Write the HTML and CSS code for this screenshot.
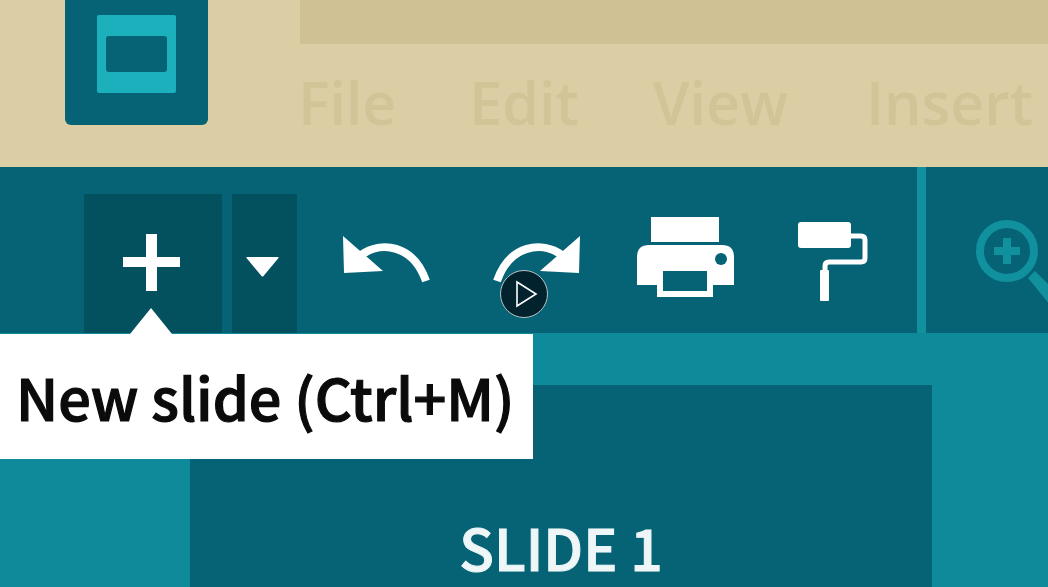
FILE: index.html
```html
<!DOCTYPE html>
<html lang="en">
<head>
    <meta charset="UTF-8">
    <meta name="viewport" content="width=device-width, initial-scale=1.0">
    <title>Slides toolbar</title>
    <link rel="stylesheet" href="styles.css">
</head>
<body>
    <div class="app">
        <header class="top">
            <div class="logo"><div class="logo-page"><div class="logo-slide"></div></div></div>
            <div class="top-right">
                <div class="title-bar"></div>
                <nav class="menu">
                    <span class="menu-file">File</span>
                    <span class="menu-edit">Edit</span>
                    <span class="menu-view">View</span>
                    <span class="menu-insert">Insert</span>
                </nav>
            </div>
        </header>

        <div class="toolbar">
            <div class="btn btn-new">
                <svg class="icon-plus" width="57" height="57" viewBox="0 0 57 57"><path d="M23 0h11v23h23v10H34v24H23V33H0V23h23z" fill="#fff"/></svg>
            </div>
            <div class="btn btn-drop">
                <svg class="icon-caret" width="33" height="20" viewBox="0 0 33 20"><path d="M1 0h31q1 0 .5 1L17.5 19q-1 1-2 0L.5 1Q0 0 1 0z" fill="#fff"/></svg>
            </div>
            <svg class="icon-undo" width="87" height="47" viewBox="0 0 87 47">
                <path d="M0 0l1 37 39-2z" fill="#fff"/>
                <path d="M18 19C38 5 70 8 83 45" fill="none" stroke="#fff" stroke-width="8"/>
            </svg>
            <svg class="icon-redo" width="87" height="47" viewBox="0 0 87 47">
                <path d="M87 0l-1 37-39-2z" fill="#fff"/>
                <path d="M69 19C49 5 17 8 4 45" fill="none" stroke="#fff" stroke-width="8"/>
            </svg>
            <svg class="icon-print" width="97" height="80" viewBox="0 0 97 80">
                <rect x="14" width="68" height="25" fill="#fff"/>
                <path d="M12 28h73q12 0 12 12v28H76v12H20V68H0V40q0-12 12-12z" fill="#fff"/>
                <rect x="26" y="54" width="44" height="20" fill="#056375"/>
                <circle cx="84" cy="42" r="6" fill="#056375"/>
            </svg>
            <svg class="icon-roller" width="70" height="79" viewBox="0 0 70 79">
                <rect width="53" height="26" rx="3" fill="#fff"/>
                <path d="M52 14h11q4 0 4 4v18q0 4-4 4H31q-4 0-4 4v6" fill="none" stroke="#fff" stroke-width="5"/>
                <rect x="22" y="48" width="9" height="31" rx="1" fill="#fff"/>
            </svg>
            <div class="divider"></div>
            <svg class="icon-zoom" width="80" height="100" viewBox="0 0 80 100">
                <circle cx="31" cy="31" r="27" fill="none" stroke="#11909d" stroke-width="8"/>
                <path d="M27 18h8v9h9v8h-9v9h-8v-9h-9v-8h9z" fill="#11909d"/>
                <path d="M52 58l7-7 30 30-10 10z" fill="#11909d"/>
            </svg>
        </div>

        <main class="workspace">
            <div class="slide"><span class="slide-label">SLIDE 1</span></div>
        </main>

        <div class="tooltip">New slide (Ctrl+M)</div>
        <div class="play">
            <svg width="24" height="28" viewBox="0 0 24 28"><path d="M2 2l19 12L2 26z" fill="none" stroke="#fff" stroke-width="1.6"/></svg>
        </div>
    </div>
</body>
</html>
```

FILE: styles.css
```css
* {
    margin: 0;
    padding: 0;
    box-sizing: border-box;
}

body {
    background: #0e8a9b;
    font-family: 'Open Sans', sans-serif;
}

.app {
    position: relative;
    width: 1048px;
    height: 587px;
    overflow: hidden;
}

/* top band */
.top {
    display: flex;
    height: 167px;
    background: #dbcea4;
}

.logo {
    width: 143px;
    height: 125px;
    margin-left: 65px;
    padding-top: 15px;
    background: #056375;
    border-radius: 0 0 6px 6px;
}

.logo-page {
    display: flex;
    align-items: center;
    justify-content: center;
    width: 79px;
    height: 78px;
    margin: 0 auto;
    background: #1bb0bb;
    border-radius: 2px;
}

.logo-slide {
    width: 61px;
    height: 36px;
    background: #056375;
    border-radius: 3px;
}

.top-right {
    flex: 1;
    margin-left: 92px;
}

.title-bar {
    height: 44px;
    background: #cfc194;
}

.menu {
    display: flex;
    margin-top: 20px;
    margin-left: -2px;
    color: #d1c497;
    font-size: 59px;
    font-weight: 600;
    line-height: 76px;
    white-space: nowrap;
}

.menu-edit {
    margin-left: 73px;
}

.menu-view {
    margin-left: 74px;
}

.menu-insert {
    margin-left: 78px;
}

/* toolbar */
.toolbar {
    display: flex;
    align-items: flex-start;
    height: 166px;
    padding: 27px 0 0 84px;
    background: #056375;
    overflow: hidden;
}

.btn {
    display: flex;
    height: 139px;
    flex-shrink: 0;
    background: #03505e;
}

.btn-new {
    width: 138px;
    padding-left: 39px;
}

.btn-drop {
    width: 65px;
    margin-left: 10px;
    padding-left: 14px;
}

.icon-plus {
    margin-top: 40px;
}

.icon-caret {
    margin-top: 63px;
}

.toolbar > svg {
    flex-shrink: 0;
}

.icon-undo {
    margin: 42px 0 0 46px;
}

.icon-redo {
    margin: 42px 0 0 63px;
}

.icon-print {
    margin: 23px 0 0 57px;
}

.icon-roller {
    margin: 28px 0 0 64px;
}

.divider {
    flex-shrink: 0;
    width: 9px;
    height: 166px;
    margin: -27px 0 0 49px;
    background: #11909d;
}

.icon-zoom {
    margin: 26px 0 0 50px;
}

/* slide area */
.workspace {
    height: 254px;
    padding: 52px 116px 0 190px;
}

.slide {
    height: 202px;
    padding-top: 129px;
    background: #056375;
    text-align: center;
}

.slide-label {
    color: #eef6f7;
    font-family: 'Noto Sans CJK SC', 'Open Sans', sans-serif;
    font-size: 57px;
    font-weight: 500;
    line-height: 64px;
    -webkit-text-stroke: 1px #eef6f7;
}

/* overlays */
.tooltip {
    position: absolute;
    left: 0;
    top: 334px;
    width: 533px;
    height: 125px;
    padding-left: 16px;
    background: #fff;
    color: #0b0b0b;
    font-family: 'Noto Sans CJK SC', 'Open Sans', sans-serif;
    font-size: 57.5px;
    font-weight: 500;
    line-height: 125px;
    white-space: nowrap;
    -webkit-text-stroke: 1.2px #0b0b0b;
}

.tooltip::before {
    content: "";
    position: absolute;
    left: 130px;
    top: -26px;
    border-left: 21px solid transparent;
    border-right: 21px solid transparent;
    border-bottom: 26px solid #fff;
}

.play {
    position: absolute;
    left: 500px;
    top: 270px;
    display: flex;
    align-items: center;
    justify-content: center;
    width: 48px;
    height: 48px;
    padding-left: 5px;
    background: #02232e;
    border: 1px solid #b9c2c4;
    border-radius: 50%;
}
```
